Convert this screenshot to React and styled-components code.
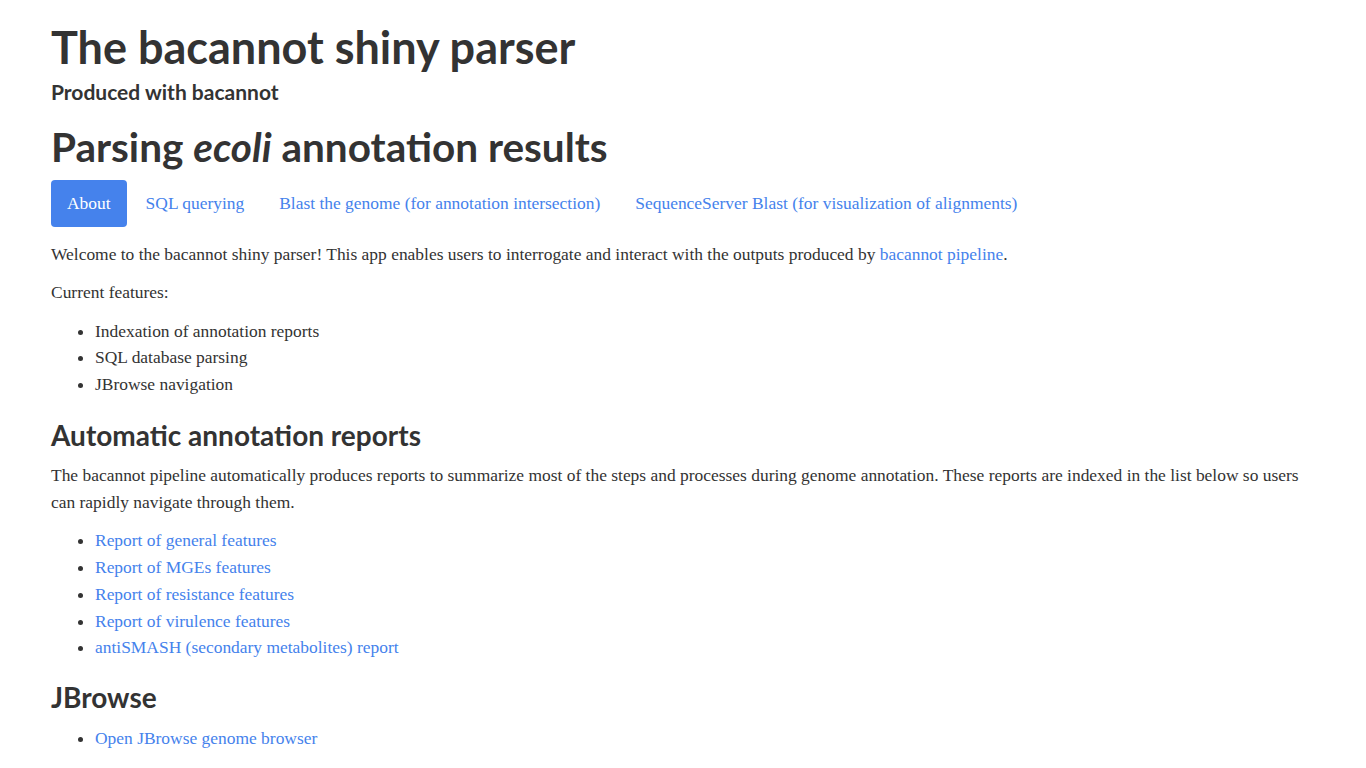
import React from "react";
import styled, { createGlobalStyle } from "styled-components";

const Global = createGlobalStyle`
  html, body { margin: 0; padding: 0; background: #fff; }
  body { font-family: "Liberation Serif", "Times New Roman", serif; font-size: 17.45px; line-height: 27px; color: #333; }
`;

const Page = styled.div`
  padding: 20px 51px 20px 51px;
  display: flex;
  flex-direction: column;
`;

const Heading = styled.div`
  font-family: Lato, "Open Sans", sans-serif;
  font-weight: ${(p) => p.$weight || 700};
  font-size: ${(p) => p.$size}px;
  line-height: 1.2;
  color: #333;
  margin: ${(p) => p.$mt || 0}px 0 ${(p) => p.$mb || 0}px;
`;

const Em = styled.em`
  font-style: italic;
`;

const Nav = styled.nav`
  display: flex;
  gap: 3px;
  margin: 8px 0 14px;
`;

const Pill = styled.a`
  display: block;
  padding: 10px 16px;
  border-radius: 4px;
  font-size: 17.45px;
  line-height: 27px;
  text-decoration: none;
  color: ${(p) => (p.$active ? "#fff" : "#4582ec")};
  background: ${(p) => (p.$active ? "#4582ec" : "transparent")};
  cursor: pointer;
`;

const P = styled.p`
  margin: 0 0 ${(p) => p.$mb ?? 11}px;
`;

const Link = styled.a`
  color: #4582ec;
  text-decoration: none;
`;

const List = styled.ul`
  margin: 0 0 ${(p) => p.$mb ?? 0}px;
  padding-left: 44px;
  li { line-height: 26.7px; }
`;

export default function App() {
  return (
    <>
      <Global />
      <Page>
        <Heading as="h1" $size={45} $mb={5}>The bacannot shiny parser</Heading>
        <Heading as="h4" $size={21} $mb={19}>Produced with bacannot</Heading>
        <Heading as="h2" $size={40.5}>
          Parsing <Em>ecoli</Em> annotation results
        </Heading>
        <Nav>
          <Pill $active>About</Pill>
          <Pill>SQL querying</Pill>
          <Pill>Blast the genome (for annotation intersection)</Pill>
          <Pill>SequenceServer Blast (for visualization of alignments)</Pill>
        </Nav>
        <P>
          Welcome to the bacannot shiny parser! This app enables users to interrogate and interact with the outputs produced by{" "}
          <Link>bacannot pipeline</Link>.
        </P>
        <P $mb={12}>Current features:</P>
        <List>
          <li>Indexation of annotation reports</li>
          <li>SQL database parsing</li>
          <li>JBrowse navigation</li>
        </List>
        <Heading as="h3" $size={28} $mt={21} $mb={10}>Automatic annotation reports</Heading>
        <P $mb={11}>
          The bacannot pipeline automatically produces reports to summarize most of the steps and processes during genome annotation. These reports are indexed in the list below so users can rapidly navigate through them.
        </P>
        <List>
          <li><Link>Report of general features</Link></li>
          <li><Link>Report of MGEs features</Link></li>
          <li><Link>Report of resistance features</Link></li>
          <li><Link>Report of virulence features</Link></li>
          <li><Link>antiSMASH (secondary metabolites) report</Link></li>
        </List>
        <Heading as="h3" $size={28} $mt={20} $mb={10}>JBrowse</Heading>
        <List>
          <li><Link>Open JBrowse genome browser</Link></li>
        </List>
      </Page>
    </>
  );
}
